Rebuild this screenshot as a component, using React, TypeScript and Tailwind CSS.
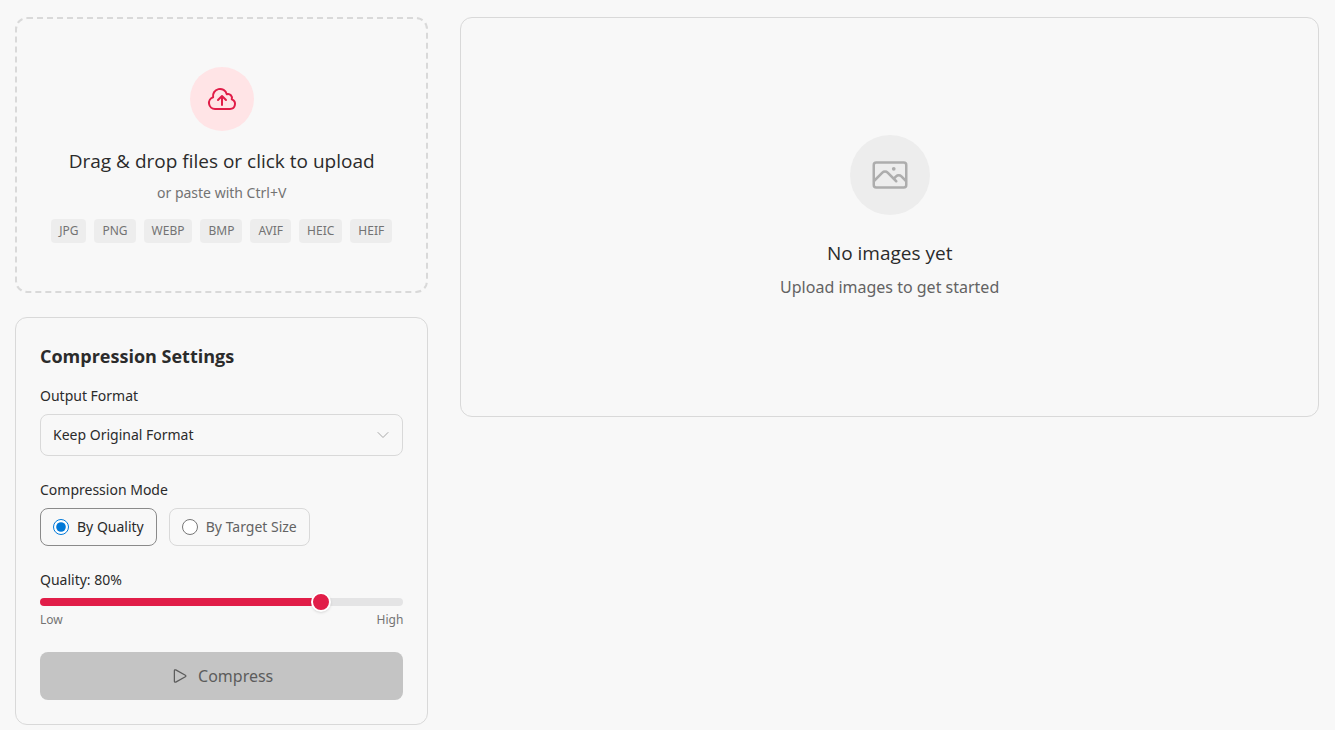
import { useState } from 'react'
import {
  HiOutlineChevronDown,
  HiOutlineCloudArrowUp,
  HiOutlinePhoto,
  HiOutlinePlay,
} from 'react-icons/hi2'

const FORMATS = ['JPG', 'PNG', 'WEBP', 'BMP', 'AVIF', 'HEIC', 'HEIF']

const MODES = [
  { value: 'quality', label: 'By Quality' },
  { value: 'size', label: 'By Target Size' },
]

const MIN_QUALITY = 5
const MAX_QUALITY = 100

function UploadArea() {
  return (
    <button
      type="button"
      className="flex w-full flex-col items-center rounded-xl border-2 border-dashed border-[#d9d9d9] px-4 py-12 cursor-pointer"
    >
      <span className="mb-4 flex size-16 items-center justify-center rounded-full bg-[#ffe4e6] text-[#e11d48]">
        <HiOutlineCloudArrowUp className="size-8" />
      </span>
      <span className="mb-2 font-['Open_Sans',sans-serif] text-[19px] leading-7 text-[#2b2b2b]">
        Drag &amp; drop files or click to upload
      </span>
      <span className="mb-4 text-sm leading-5 text-[#737373]">or paste with Ctrl+V</span>
      <span className="flex flex-wrap justify-center gap-2">
        {FORMATS.map((format) => (
          <span key={format} className="rounded bg-[#ededed] px-2 py-1 text-xs leading-4 text-[#737373]">
            {format}
          </span>
        ))}
      </span>
    </button>
  )
}

function Settings() {
  const [mode, setMode] = useState('quality')
  const [quality, setQuality] = useState(80)
  const ratio = (quality - MIN_QUALITY) / (MAX_QUALITY - MIN_QUALITY)
  const fill = `${ratio * 100}%`

  return (
    <section className="rounded-xl border border-[#d9d9d9] p-6">
      <h2 className="mb-4 font-['Open_Sans',sans-serif] text-lg leading-7 font-bold text-[#2b2b2b]">
        Compression Settings
      </h2>

      {/* Output format */}
      <div className="mb-6">
        <label htmlFor="format" className="mb-2 block text-sm leading-5">
          Output Format
        </label>
        <div className="relative">
          <select
            id="format"
            className="block w-full appearance-none rounded-lg border border-[#d9d9d9] bg-transparent px-3 py-2.5 text-sm leading-5"
          >
            <option>Keep Original Format</option>
            <option>JPG</option>
            <option>PNG</option>
            <option>WEBP</option>
          </select>
          <HiOutlineChevronDown className="pointer-events-none absolute inset-y-0 right-3 my-auto size-4 text-[#a8a8a8]" />
        </div>
      </div>

      {/* Mode */}
      <fieldset className="mb-6">
        <legend className="mb-2 text-sm leading-5">Compression Mode</legend>
        <div className="flex flex-wrap gap-3">
          {MODES.map((item) => (
            <label
              key={item.value}
              className={`flex items-center gap-2 rounded-lg border px-3 py-2 text-sm leading-5 cursor-pointer ${
                mode === item.value ? 'border-[#8a8a8a] text-[#2b2b2b]' : 'border-[#d9d9d9] text-[#636363]'
              }`}
            >
              <input
                type="radio"
                name="mode"
                className="size-4 accent-[#0078d7]"
                checked={mode === item.value}
                onChange={() => setMode(item.value)}
              />
              {item.label}
            </label>
          ))}
        </div>
      </fieldset>

      {/* Quality */}
      <div className="mb-6">
        <label htmlFor="quality" className="mb-2 block text-sm leading-5">
          Quality: {quality}%
        </label>
        <input
          id="quality"
          type="range"
          min={MIN_QUALITY}
          max={MAX_QUALITY}
          value={quality}
          onChange={(e) => setQuality(Number(e.target.value))}
          style={{ backgroundImage: `linear-gradient(to right, #e11d48 ${fill}, #e4e4e5 ${fill})` }}
          className="block h-2 w-full appearance-none rounded-full cursor-pointer [&::-webkit-slider-thumb]:size-5 [&::-webkit-slider-thumb]:appearance-none [&::-webkit-slider-thumb]:rounded-full [&::-webkit-slider-thumb]:border-2 [&::-webkit-slider-thumb]:border-white [&::-webkit-slider-thumb]:bg-[#e11d48] [&::-webkit-slider-thumb]:shadow-sm"
        />
        <div className="mt-1.5 flex justify-between text-xs leading-4 text-[#737373]">
          <span>Low</span>
          <span>High</span>
        </div>
      </div>

      <button
        type="button"
        disabled
        className="flex h-12 w-full items-center justify-center gap-2 rounded-lg bg-[#c4c4c4] text-base text-[#5c5c5c]"
      >
        <HiOutlinePlay className="size-5" />
        Compress
      </button>
    </section>
  )
}

function EmptyState() {
  return (
    <section className="flex min-h-[400px] flex-col items-center justify-center rounded-xl border border-[#d9d9d9] p-8 text-center">
      <div className="mb-6 flex size-20 items-center justify-center rounded-full bg-[#ededed] text-[#adadad]">
        <HiOutlinePhoto className="size-10" />
      </div>
      <h3 className="mb-2 font-['Open_Sans',sans-serif] text-[19px] leading-7 text-[#2b2b2b]">No images yet</h3>
      <p className="text-base leading-6 text-[#636363]">Upload images to get started</p>
    </section>
  )
}

export default function App() {
  return (
    <main className="min-h-screen bg-[#f8f8f8] pt-[17px] pr-4 pb-[5px] pl-[15px] font-['Noto_Sans','Open_Sans',sans-serif] text-[#2b2b2b]">
      <div className="grid grid-cols-1 items-start gap-8 md:grid-cols-3">
        <div className="flex flex-col gap-6">
          <UploadArea />
          <Settings />
        </div>
        <div className="md:col-span-2">
          <EmptyState />
        </div>
      </div>
    </main>
  )
}
